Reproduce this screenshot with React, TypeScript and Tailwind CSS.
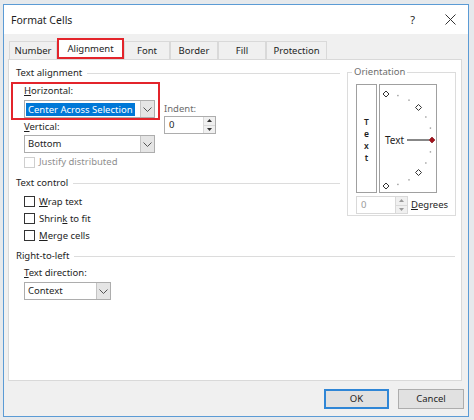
import React from 'react'

const Chevron = () => (
    <svg width="9" height="5" viewBox="0 0 9 5">
        <path d="M0.5 0.5 L4.5 4.5 L8.5 0.5" fill="none" stroke="#555" strokeWidth="1" />
    </svg>
)

const Dropdown = ({ text, width, selected = false }: { text: string; width: string; selected?: boolean }) => (
    <div className={`flex h-[18px] ${width} border border-[#adadad] bg-white`}>
        <div className="flex flex-1 items-center pl-[1px]">
            {selected ? (
                <span className="bg-[#0078d7] px-[2px] leading-[13px] text-white">{text}</span>
            ) : (
                <span className="pl-[2px]">{text}</span>
            )}
        </div>
        <div className="flex w-[14px] items-center justify-center border-l border-[#c4c4c4] bg-[#e5e5e5]">
            <Chevron />
        </div>
    </div>
)

const Spinner = ({ value, disabled = false }: { value: string; disabled?: boolean }) => (
    <div className={`flex h-[18px] w-[52px] border ${disabled ? 'border-[#d9d9d9]' : 'border-[#adadad]'} bg-white`}>
        <div className={`flex flex-1 items-center pl-[4px] ${disabled ? 'text-[#9a9a9a]' : ''}`}>{value}</div>
        <div className="flex w-[12px] flex-col border-l border-[#d9d9d9] bg-[#f0f0f0]">
            <div className="flex flex-1 items-center justify-center border-b border-[#d9d9d9]">
                <svg width="5" height="3" viewBox="0 0 5 3"><path d="M0 3 L2.5 0 L5 3 Z" fill={disabled ? '#999' : '#333'} /></svg>
            </div>
            <div className="flex flex-1 items-center justify-center">
                <svg width="5" height="3" viewBox="0 0 5 3"><path d="M0 0 L2.5 3 L5 0 Z" fill={disabled ? '#999' : '#333'} /></svg>
            </div>
        </div>
    </div>
)

const GroupHeader = ({ title }: { title: string }) => (
    <div className="flex h-[14px] items-center">
        <span>{title}</span>
        <div className="ml-[5px] h-px flex-1 bg-[#dcdcdc]" />
    </div>
)

const Check = ({ children, disabled = false }: { children: React.ReactNode; disabled?: boolean }) => (
    <div className={`flex h-[17px] items-center ${disabled ? 'text-[#8f8f8f]' : ''}`}>
        <div className={`h-[11px] w-[11px] border ${disabled ? 'border-[#cfcfcf]' : 'border-[#333]'} bg-white`} />
        <span className="ml-[4px]">{children}</span>
    </div>
)

const Dial = () => {
    const cx = 6
    const cy = 55
    const r = 46
    const pt = (deg: number) => {
        const a = (deg * Math.PI) / 180
        return [cx + r * Math.cos(a), cy - r * Math.sin(a)]
    }
    const diamond = (x: number, y: number) => `M${x} ${y - 3} L${x + 3} ${y} L${x} ${y + 3} L${x - 3} ${y} Z`
    const dots = [75, 60, 30, 15, -15, -30, -60, -75]
    const marks = [90, 45, -45, -90]
    const [rx, ry] = pt(0)
    return (
        <svg width="56" height="107" viewBox="0 0 56 107">
            {dots.map((d) => {
                const [x, y] = pt(d)
                return <rect key={d} x={x - 0.7} y={y - 0.7} width="1.4" height="1.4" fill="#9a9a9a" />
            })}
            {marks.map((d) => {
                const [x, y] = pt(d)
                return <path key={d} d={diamond(x, y)} fill="white" stroke="#333" strokeWidth="1" />
            })}
            <text x="5" y="58.5" fontSize="10" fontFamily="Noto Sans, sans-serif" fill="#1e1e1e">Text</text>
            <line x1="27" y1="55" x2="49" y2="55" stroke="#111" strokeWidth="1" />
            <path d={diamond(rx, ry)} fill="#a3131c" stroke="#7a0d14" strokeWidth="0.6" />
        </svg>
    )
}

const tabs = [
    { label: 'Number', w: 'w-[48px]' },
    { label: 'Alignment', w: 'w-[67px]', active: true },
    { label: 'Font', w: 'w-[46px]' },
    { label: 'Border', w: 'w-[48px]' },
    { label: 'Fill', w: 'w-[48px]' },
    { label: 'Protection', w: 'w-[61px]' },
]

export default function App() {
    return (
        <div className="h-[420px] w-[474px] overflow-hidden bg-[#e6e9ec] pl-[3px] pt-[4px] font-['Noto_Sans',sans-serif] text-[9.5px] leading-[14px] text-[#1e1e1e]">
            <div className="flex h-[413px] w-[466px] flex-col border border-[#5b9bd5] bg-[#f0f0f0]">
                {/* title bar */}
                <div className="flex h-[29px] items-center bg-white pl-[7px] pr-[12px]">
                    <span className="text-[10.5px]">Format Cells</span>
                    <span className="ml-auto mr-[30px] text-[11px]">?</span>
                    <svg width="11" height="11" viewBox="0 0 11 11">
                        <path d="M0.5 0.5 L10.5 10.5 M10.5 0.5 L0.5 10.5" stroke="#333" strokeWidth="1" />
                    </svg>
                </div>

                {/* tabs */}
                <div className="ml-[5px] mt-[7px] flex h-[18px] items-end">
                    {tabs.map((t) =>
                        t.active ? (
                            <div key={t.label} className={`flex h-[21px] ${t.w} items-center justify-center border-2 border-[#e3242b] bg-white`}>
                                {t.label}
                            </div>
                        ) : (
                            <div key={t.label} className={`flex h-[18px] ${t.w} items-center justify-center border border-b-0 border-[#d9d9d9]`}>
                                {t.label}
                            </div>
                        )
                    )}
                </div>

                {/* panel */}
                <div className="ml-[4px] flex h-[322px] w-[454px] flex-col border border-[#d9d9d9] bg-white">
                    <div className="flex">
                        {/* left column */}
                        <div className="flex w-[338px] flex-col pl-[2px] pr-[7px]">
                            <div className="ml-[5px] mt-[6px]">
                                <GroupHeader title="Text alignment" />
                            </div>
                            <div className="mt-[2px] flex">
                                <div className="flex w-[149px] flex-col">
                                    <div className="h-[38px] border-2 border-[#e3242b] pl-[11px]">
                                        <div className="h-[14px]"><span className="underline">H</span>orizontal:</div>
                                        <div className="mt-[2px]">
                                            <Dropdown text="Center Across Selection" width="w-[131px]" selected />
                                        </div>
                                    </div>
                                    <div className="ml-[13px] h-[14px]"><span className="underline">V</span>ertical:</div>
                                    <div className="ml-[13px] mt-[1px]">
                                        <Dropdown text="Bottom" width="w-[131px]" />
                                    </div>
                                    <div className="ml-[13px] mt-[3px] flex h-[12px] items-center text-[#8f8f8f]">
                                        <div className="h-[11px] w-[11px] border border-[#cfcfcf] bg-white" />
                                        <span className="ml-[4px]">Justify distributed</span>
                                    </div>
                                </div>
                                <div className="ml-[4px] mt-[20px] flex flex-col">
                                    <div className="h-[14px] text-[#6d6d6d]">Indent:</div>
                                    <Spinner value="0" />
                                </div>
                            </div>

                            <div className="ml-[5px] mt-[8px]">
                                <GroupHeader title="Text control" />
                            </div>
                            <div className="ml-[13px] mt-[3px] flex flex-col">
                                <Check><span className="underline">W</span>rap text</Check>
                                <Check>Shrin<span className="underline">k</span> to fit</Check>
                                <Check><span className="underline">M</span>erge cells</Check>
                            </div>
                        </div>

                        {/* orientation */}
                        <div className="mt-[12px] flex h-[144px] w-[109px] flex-col self-start border border-[#dcdcdc] pl-[8px]">
                            <div className="-ml-[4px] -mt-[8px] w-fit bg-white px-[2px] text-[#6d6d6d]">Orientation</div>
                            <div className="mt-[5px] flex gap-[2px]">
                                <div className="flex h-[109px] w-[21px] flex-col items-center justify-center border border-[#a0a0a0] pt-[3px] text-[8.5px] font-semibold leading-[12px]">
                                    <span>T</span>
                                    <span>e</span>
                                    <span>x</span>
                                    <span>t</span>
                                </div>
                                <div className="h-[109px] w-[58px] border border-[#a0a0a0]">
                                    <Dial />
                                </div>
                            </div>
                            <div className="mt-[3px] flex items-center">
                                <Spinner value="0" disabled />
                                <span className="ml-[3px]"><span className="underline">D</span>egrees</span>
                            </div>
                        </div>
                    </div>

                    {/* right-to-left */}
                    <div className="ml-[7px] mr-[6px] mt-[5px]">
                        <GroupHeader title="Right-to-left" />
                    </div>
                    <div className="ml-[15px] mt-[3px] h-[14px]"><span className="underline">T</span>ext direction:</div>
                    <div className="ml-[15px] mt-[2px]">
                        <Dropdown text="Context" width="w-[87px]" />
                    </div>
                </div>

                {/* footer */}
                <div className="mt-[8px] flex justify-end gap-[9px] pr-[4px]">
                    <button className="flex h-[20px] w-[65px] items-center justify-center border-2 border-[#2f86d6] bg-[#e1e1e1]">OK</button>
                    <button className="flex h-[20px] w-[66px] items-center justify-center border border-[#adadad] bg-[#e1e1e1]">Cancel</button>
                </div>
            </div>
        </div>
    )
}
